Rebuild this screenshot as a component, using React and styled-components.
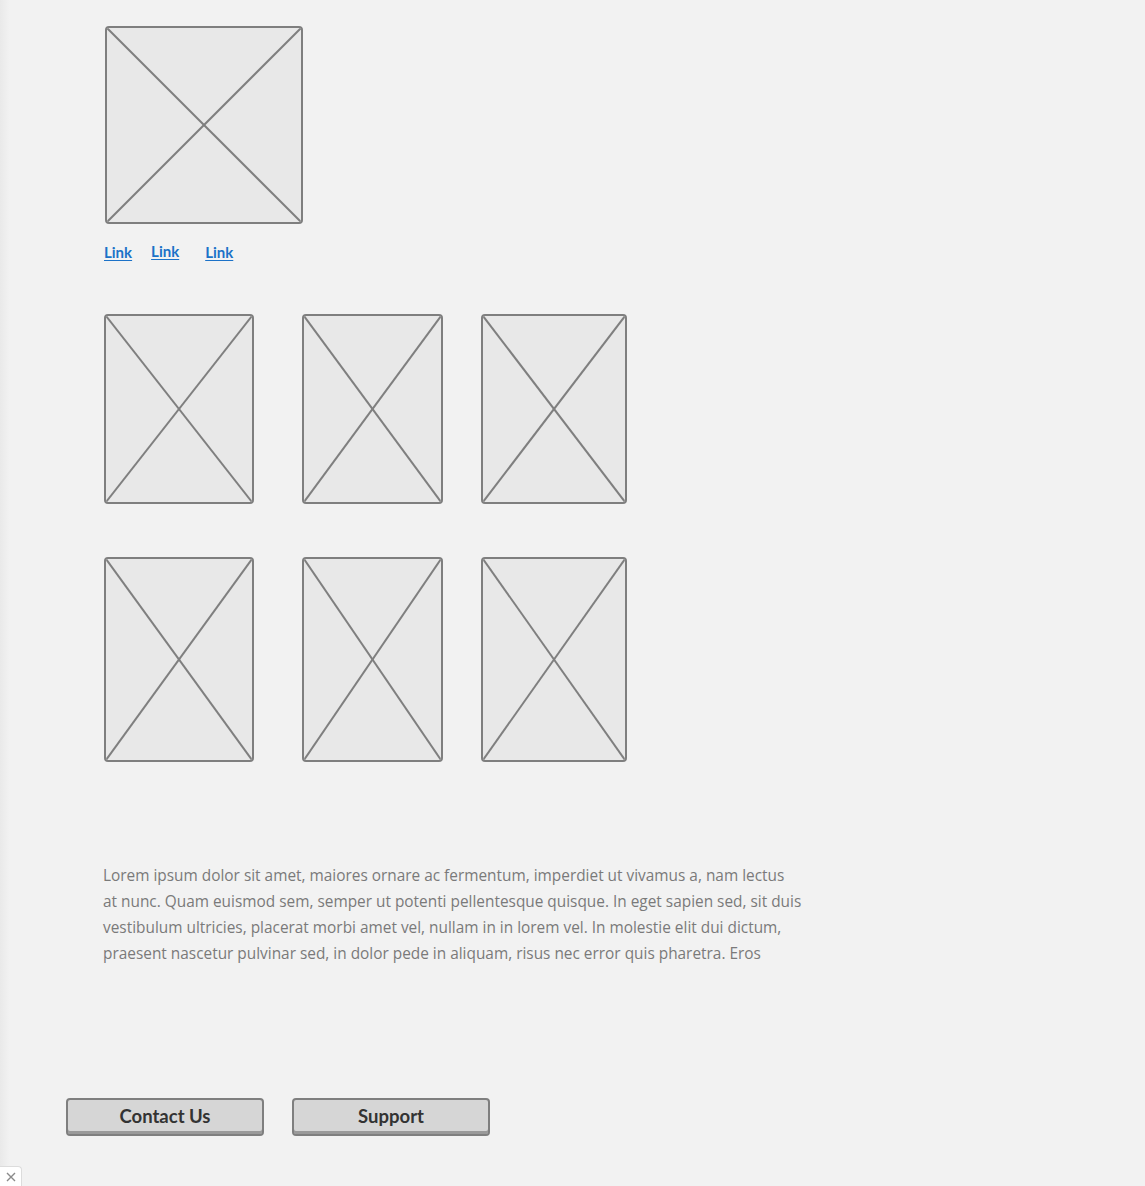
import React from "react";
import styled, { createGlobalStyle } from "styled-components";

const GlobalStyle = createGlobalStyle`
  html, body {
    margin: 0;
    padding: 0;
  }
  body {
    background: linear-gradient(to right, #e9e9e9 0px, #f2f2f2 10px);
    font-family: "Open Sans", Lato, sans-serif;
    min-height: 1186px;
  }
`;

const Page = styled.div`
  display: flex;
  flex-direction: column;
  padding: 26px 0 0 0;
`;

const Content = styled.div`
  display: flex;
  flex-direction: column;
  padding-left: 104px;
`;

const Frame = styled.div`
  width: ${(p) => p.$w}px;
  height: ${(p) => p.$h}px;
  margin-left: ${(p) => p.$offset || 0}px;
  box-sizing: border-box;
  border: 2px solid #7f7f7f;
  border-radius: 4px;
  background: #e8e8e8;
  overflow: hidden;
  flex: none;

  svg {
    display: block;
    width: 100%;
    height: 100%;
  }
`;

const LinkRow = styled.div`
  display: flex;
  align-items: flex-start;
  gap: 19px;
  margin-top: 18px;
  height: 21px;
`;

const NavLink = styled.a`
  font-family: Lato, sans-serif;
  font-size: 15px;
  font-weight: 700;
  color: #1c72c8;
  text-decoration: underline;
  text-underline-offset: 2px;
  cursor: pointer;
  margin-top: ${(p) => (p.$raise ? 0 : 1)}px;
  margin-left: ${(p) => p.$extra || 0}px;
`;

const Grid = styled.div`
  display: flex;
  flex-direction: column;
  gap: 53px;
  margin-top: 51px;
`;

const Row = styled.div`
  display: flex;
  align-items: flex-start;
`;

const Text = styled.p`
  margin: 101px 0 0 -1px;
  width: 740px;
  font-size: 15.4px;
  font-weight: 500;
  line-height: 26px;
  color: #7a7a7a;
`;

const Buttons = styled.div`
  display: flex;
  gap: 28px;
  padding-left: 66px;
  margin-top: 131px;
`;

const Button = styled.button`
  width: 198px;
  height: 38px;
  box-sizing: border-box;
  border: 2px solid #7f7f7f;
  border-radius: 4px;
  background: #d6d6d6;
  box-shadow: inset 0 -3px 0 #9a9a9a;
  font-family: Lato, sans-serif;
  font-size: 18.5px;
  font-weight: 700;
  color: #333;
  padding: 0 0 2px;
  cursor: pointer;
`;

const CloseTab = styled.div`
  position: fixed;
  left: 0;
  bottom: 0;
  width: 22px;
  height: 20px;
  box-sizing: border-box;
  background: #ffffff;
  border: 1px solid #dcdcdc;
  border-left: none;
  border-bottom: none;
  border-top-right-radius: 4px;
  display: flex;
  align-items: center;
  justify-content: center;

  svg {
    display: block;
  }
`;

function Placeholder({ w, h, offset }) {
  return (
    <Frame $w={w} $h={h} $offset={offset}>
      <svg viewBox={`0 0 ${w - 4} ${h - 4}`} preserveAspectRatio="none">
        <line x1="0" y1="0" x2={w - 4} y2={h - 4} stroke="#7f7f7f" strokeWidth="2" />
        <line x1={w - 4} y1="0" x2="0" y2={h - 4} stroke="#7f7f7f" strokeWidth="2" />
      </svg>
    </Frame>
  );
}

const columns = [
  { w: 150, offset: 0 },
  { w: 141, offset: 48 },
  { w: 146, offset: 38 },
];

export default function App() {
  return (
    <>
      <GlobalStyle />
      <Page>
        <Content>
          <Placeholder w={198} h={198} offset={1} />
          <LinkRow>
            <NavLink>Link</NavLink>
            <NavLink $raise>Link</NavLink>
            <NavLink $extra={7}>Link</NavLink>
          </LinkRow>
          <Grid>
            <Row>
              {columns.map((c, i) => (
                <Placeholder key={i} w={c.w} h={190} offset={c.offset} />
              ))}
            </Row>
            <Row>
              {columns.map((c, i) => (
                <Placeholder key={i} w={c.w} h={205} offset={c.offset} />
              ))}
            </Row>
          </Grid>
          <Text>
            Lorem ipsum dolor sit amet, maiores ornare ac fermentum, imperdiet ut vivamus a, nam lectus
            <br />
            at nunc. Quam euismod sem, semper ut potenti pellentesque quisque. In eget sapien sed, sit duis
            <br />
            vestibulum ultricies, placerat morbi amet vel, nullam in in lorem vel. In molestie elit dui dictum,
            <br />
            praesent nascetur pulvinar sed, in dolor pede in aliquam, risus nec error quis pharetra. Eros
          </Text>
        </Content>
        <Buttons>
          <Button>Contact Us</Button>
          <Button>Support</Button>
        </Buttons>
      </Page>
      <CloseTab>
        <svg width="10" height="10" viewBox="0 0 10 10">
          <path d="M1 1L9 9M9 1L1 9" stroke="#8a8a8a" strokeWidth="1.4" />
        </svg>
      </CloseTab>
    </>
  );
}
